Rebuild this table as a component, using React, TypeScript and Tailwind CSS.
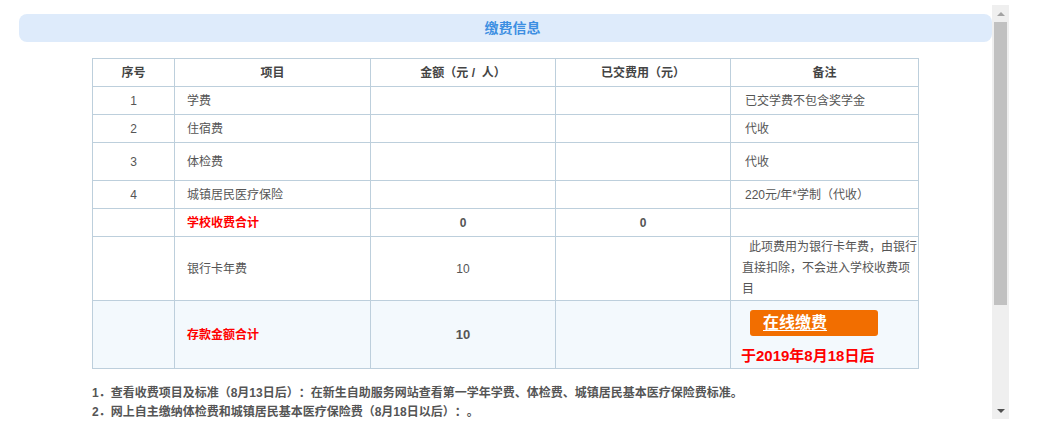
import React from "react";

const rows = [
  { no: "1", item: "学费", remark: "已交学费不包含奖学金", h: "h-[28px]" },
  { no: "2", item: "住宿费", remark: "代收", h: "h-[28px]" },
  { no: "3", item: "体检费", remark: "代收", h: "h-[38px]" },
  { no: "4", item: "城镇居民医疗保险", remark: "220元/年*学制（代收）", h: "h-[28px]" },
];

const cell = "border border-[#bdcfdc] p-0";

function Scrollbar() {
  return (
    <div className="mt-[5px] flex h-[414px] w-[17px] flex-col items-center bg-[#efefef]">
      <div className="flex h-[17px] w-full items-center justify-center">
        <div className="h-0 w-0 border-x-[4px] border-b-[4px] border-x-transparent border-b-[#a3a3a3]" />
      </div>
      <div className="h-[283px] w-[13px] bg-[#c1c1c1]" />
      <div className="flex-1" />
      <div className="flex h-[17px] w-full items-center justify-center">
        <div className="h-0 w-0 border-x-[4px] border-t-[4px] border-x-transparent border-t-[#505050]" />
      </div>
    </div>
  );
}

export default function App() {
  return (
    <div
      className="flex h-[431px] w-[1038px] overflow-hidden bg-white text-[12px] text-[#555] [text-spacing-trim:space-all]"
      style={{ fontFamily: '"Liberation Sans", "Noto Sans CJK SC", sans-serif' }}
    >
      <div className="w-[992px] shrink-0 pl-[19px] pt-[14px]">
        {/* Section title */}
        <div className="flex h-[28px] items-center justify-center rounded-[8px] bg-[#deebfb] pl-[14px] text-[14px] font-bold text-[#3d8fe2]">
          缴费信息
        </div>

        <table className="mx-auto mt-[16px] w-[826px] table-fixed border-collapse">
          <colgroup>
            <col className="w-[82px]" />
            <col className="w-[196px]" />
            <col className="w-[185px]" />
            <col className="w-[175px]" />
            <col className="w-[188px]" />
          </colgroup>
          <thead>
            <tr className="h-[28px] font-bold text-[#444]">
              <th className={`${cell} font-bold`}>序号</th>
              <th className={`${cell} font-bold`}>项目</th>
              <th className={`${cell} font-bold`}>金额（元 / &nbsp;人）</th>
              <th className={`${cell} font-bold`}>已交费用（元）</th>
              <th className={`${cell} font-bold`}>备注</th>
            </tr>
          </thead>
          <tbody>
            {rows.map((r) => (
              <tr key={r.no} className={r.h}>
                <td className={`${cell} text-center`}>{r.no}</td>
                <td className={`${cell} pl-[12px]`}>{r.item}</td>
                <td className={cell} />
                <td className={cell} />
                <td className={`${cell} pl-[14px]`}>{r.remark}</td>
              </tr>
            ))}
            <tr className="h-[28px]">
              <td className={cell} />
              <td className={`${cell} pl-[12px] font-bold text-[#ff0000]`}>学校收费合计</td>
              <td className={`${cell} text-center font-bold`}>0</td>
              <td className={`${cell} text-center font-bold`}>0</td>
              <td className={cell} />
            </tr>
            <tr className="h-[64px]">
              <td className={cell} />
              <td className={`${cell} pl-[12px]`}>银行卡年费</td>
              <td className={`${cell} text-center`}>10</td>
              <td className={cell} />
              <td className={`${cell} pl-[11px] leading-[21px]`}>
                <div className="pl-[7px]">此项费用为银行卡年费，由银行</div>
                <div>直接扣除，不会进入学校收费项</div>
                <div>目</div>
              </td>
            </tr>
            <tr className="h-[66px] bg-[#f3f9fd]">
              <td className={cell} />
              <td className={`${cell} pl-[12px] font-bold text-[#ff0000]`}>存款金额合计</td>
              <td className={`${cell} text-center text-[13px] font-bold`}>10</td>
              <td className={cell} />
              <td className={`${cell} pl-[10px] pt-[9px] pb-[3px]`}>
                <div className="ml-[9px] flex h-[26px] w-[128px] items-center rounded-[3px] bg-[#f26e00] pl-[13px] text-[16px] font-bold text-white underline underline-offset-2">
                  在线缴费
                </div>
                <div className="mt-[11px] text-[15px] font-bold leading-[18px] text-[#ff0000]">
                  于2019年8月18日后
                </div>
              </td>
            </tr>
          </tbody>
        </table>

        {/* Notes */}
        <div className="ml-[73px] mt-[15px] font-bold leading-[19px] text-[#555]">
          <p>1．查看收费项目及标准（8月13日后）：在新生自助服务网站查看第一学年学费、体检费、城镇居民基本医疗保险费标准。</p>
          <p>2．网上自主缴纳体检费和城镇居民基本医疗保险费（8月18日以后）：。</p>
        </div>
      </div>
      <Scrollbar />
    </div>
  );
}
